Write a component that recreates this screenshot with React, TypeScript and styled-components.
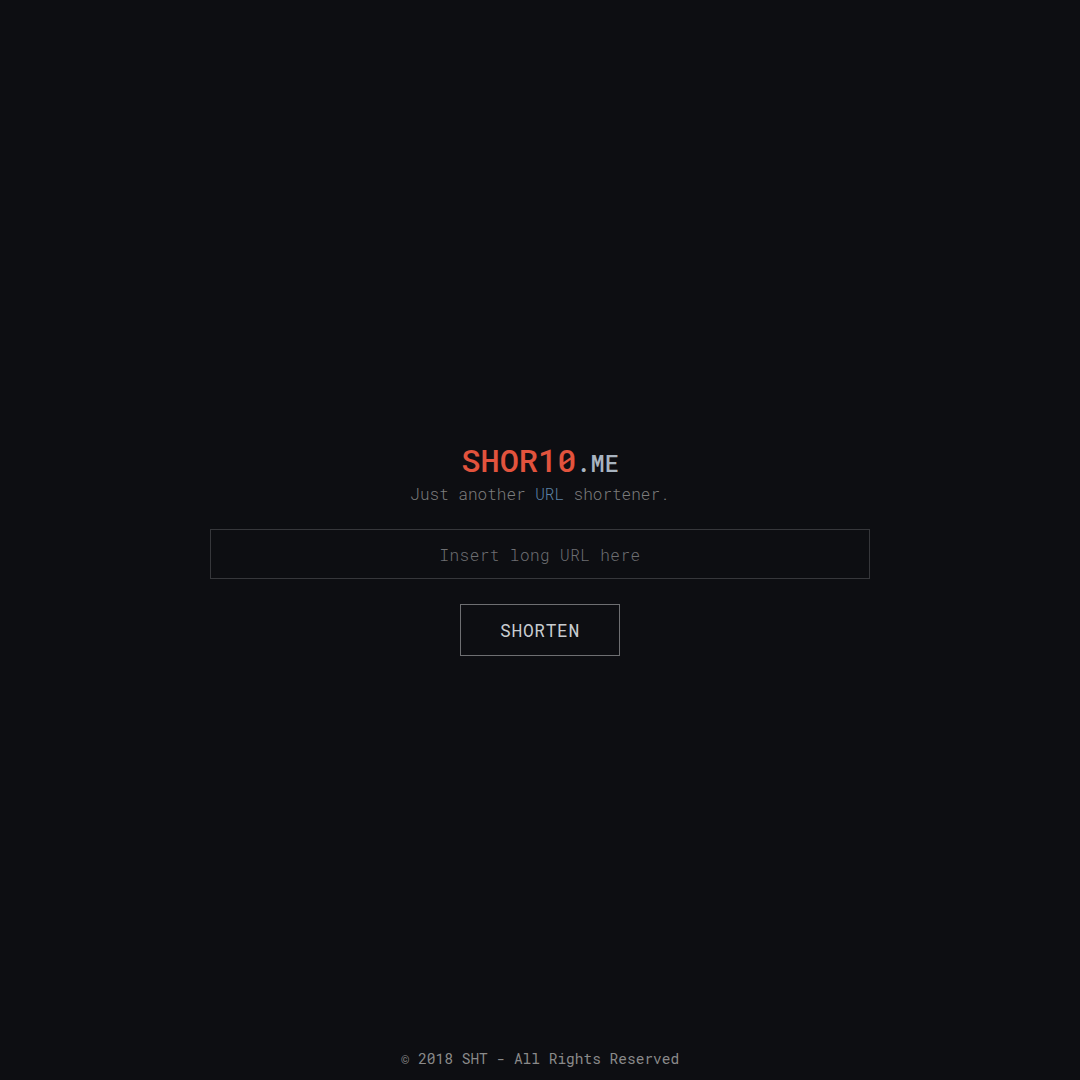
import React from "react";
import styled, { createGlobalStyle } from "styled-components";

const GlobalStyle = createGlobalStyle`
  html, body {
    margin: 0;
    padding: 0;
    background: #0d0e12;
  }
  body {
    font-family: "Roboto Mono", "DejaVu Sans Mono", "Liberation Mono", monospace;
    color: #c8ccd0;
  }
  * { box-sizing: border-box; }
`;

const Page = styled.div`
  min-height: 100vh;
  display: flex;
  flex-direction: column;
  background: #0d0e12;
`;

const Main = styled.main`
  flex: 1;
  display: flex;
  flex-direction: column;
  align-items: center;
  justify-content: center;
  padding-top: 45px;
`;

const Title = styled.h1`
  margin: 3px 0 0;
  font-size: 32px;
  line-height: 38px;
  font-weight: 500;
  color: #e2533d;
  letter-spacing: 0;
`;

const Tld = styled.span`
  font-size: 23.5px;
  line-height: 1;
  font-weight: 500;
  color: #a8b4c0;
`;

const Tagline = styled.p`
  margin: 5px 0 0;
  font-size: 16px;
  line-height: 20px;
  font-weight: 300;
  color: #7d7d7d;
`;

const Accent = styled.span`
  color: #5d82a6;
`;

const Form = styled.form`
  margin-top: 25px;
  display: flex;
  flex-direction: column;
  align-items: center;
  gap: 25px;
`;

const UrlInput = styled.input`
  width: 660px;
  height: 50px;
  background: transparent;
  border: 1px solid #36373b;
  outline: none;
  text-align: center;
  font-family: inherit;
  font-size: 16px;
  font-weight: 300;
  letter-spacing: 0.45px;
  color: #c8ccd0;
  &::placeholder {
    color: #6e6f72;
  }
`;

const Button = styled.button`
  width: 160px;
  height: 52px;
  background: transparent;
  border: 1px solid #6e6f72;
  color: #c8ccd0;
  font-family: inherit;
  font-size: 18px;
  letter-spacing: 0.6px;
  cursor: pointer;
`;

const Footer = styled.footer`
  text-align: center;
  font-size: 14.5px;
  line-height: 20px;
  color: #8a8a8a;
  padding-bottom: 11px;
`;

export default function App() {
  return (
    <>
      <GlobalStyle />
      <Page>
        <Main>
          <Title>
            SHOR10<Tld>.ME</Tld>
          </Title>
          <Tagline>
            Just another <Accent>URL</Accent> shortener.
          </Tagline>
          <Form onSubmit={(e) => e.preventDefault()}>
            <UrlInput placeholder="Insert long URL here" />
            <Button type="submit">SHORTEN</Button>
          </Form>
        </Main>
        <Footer>© 2018 SHT - All Rights Reserved</Footer>
      </Page>
    </>
  );
}
